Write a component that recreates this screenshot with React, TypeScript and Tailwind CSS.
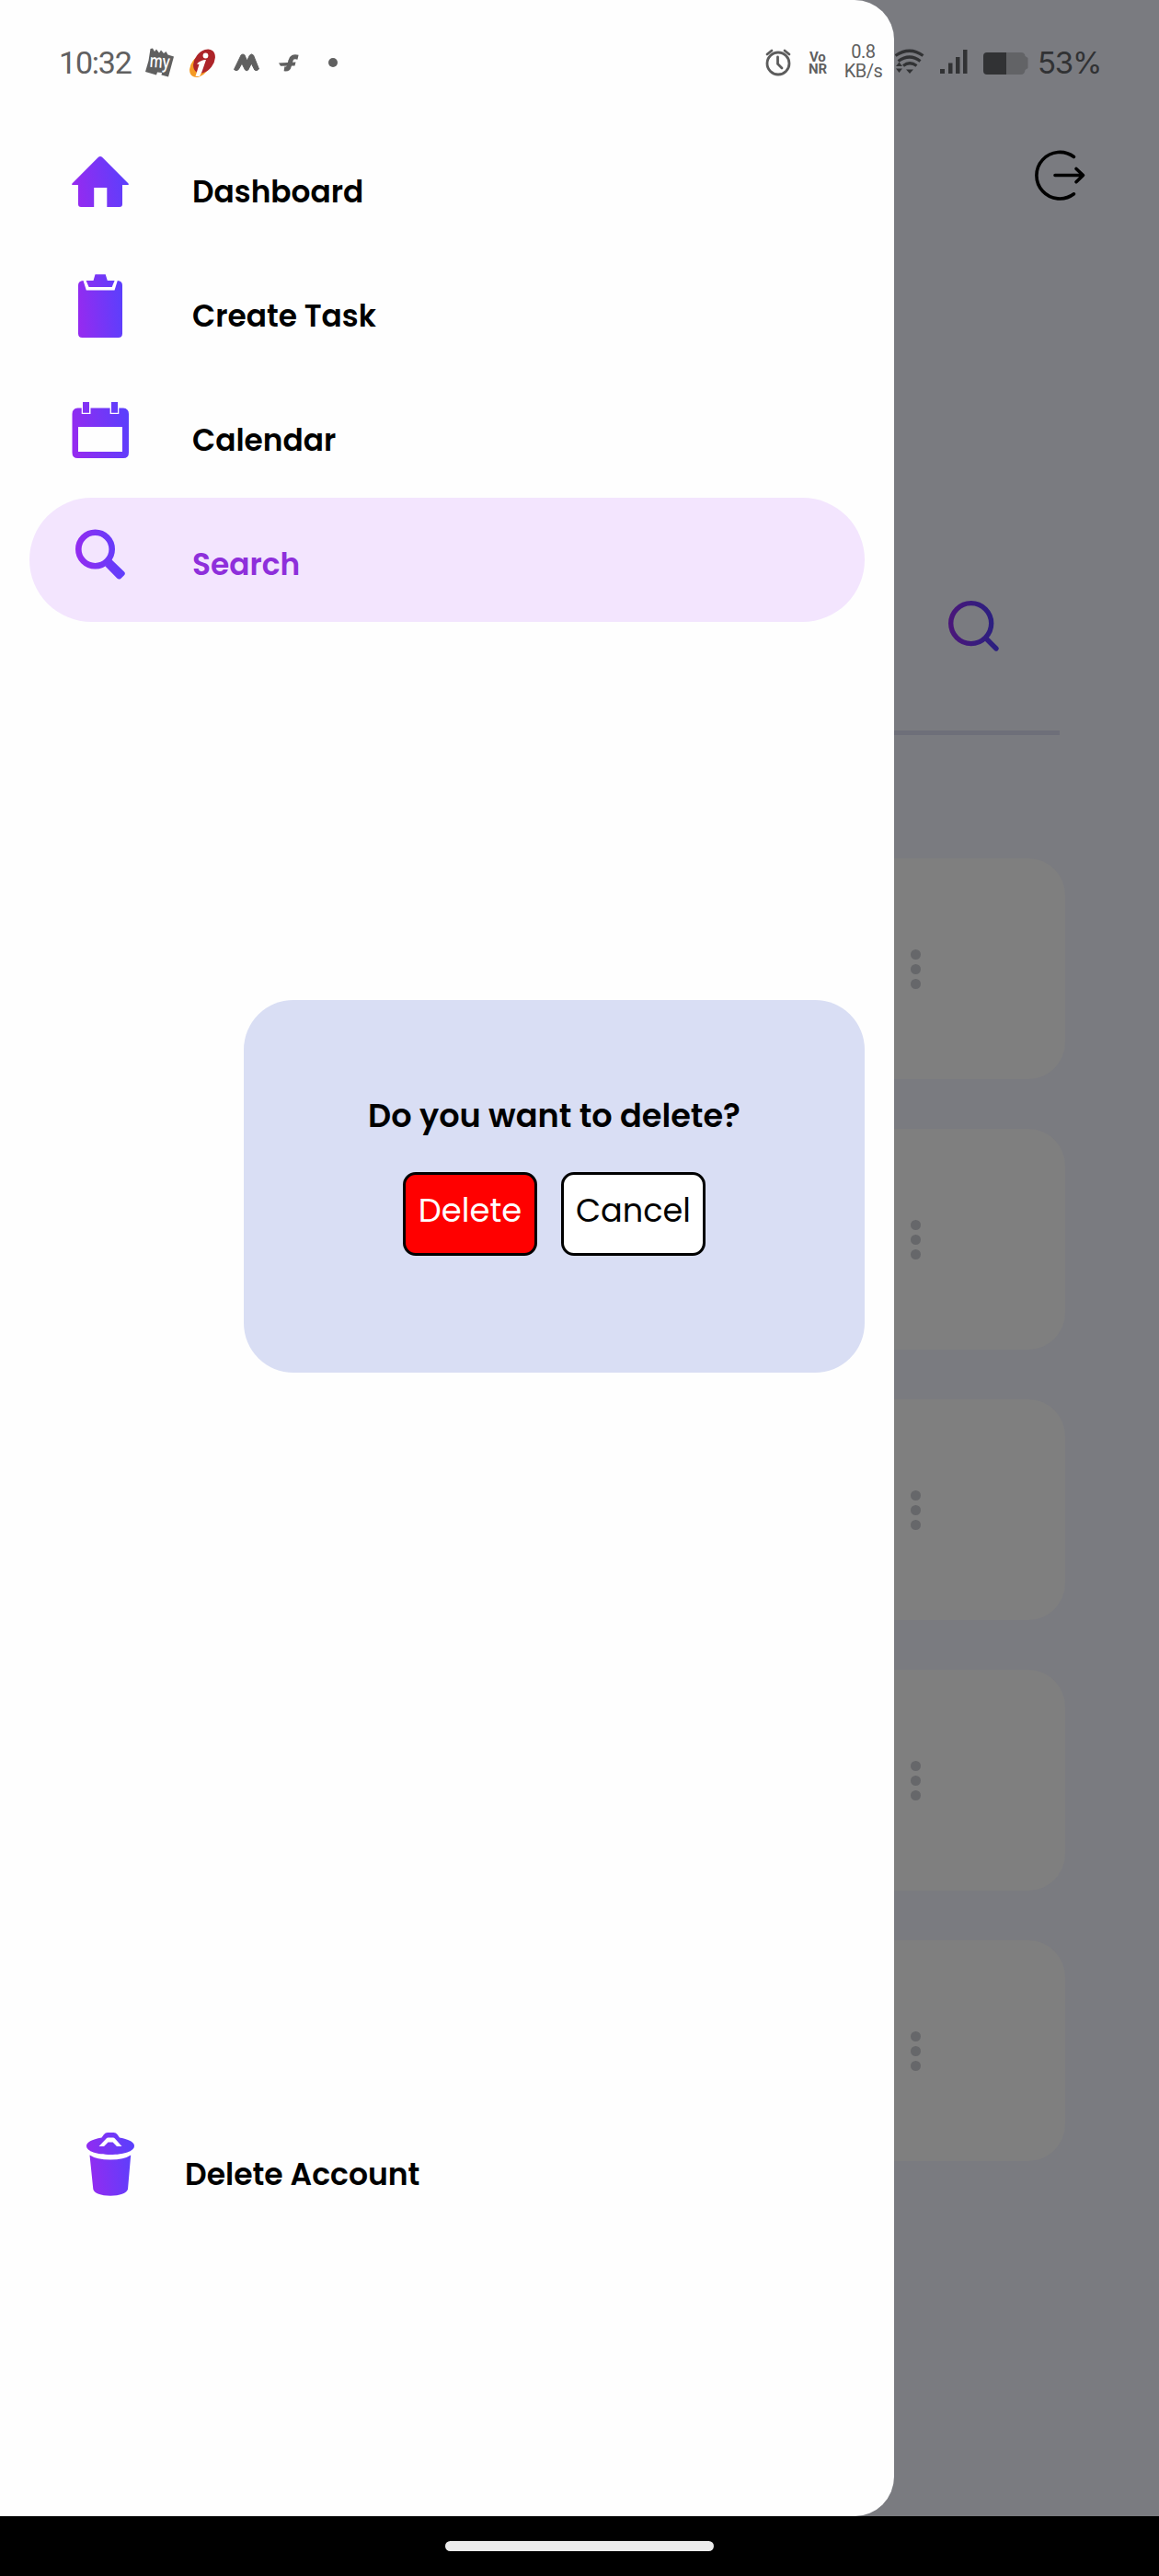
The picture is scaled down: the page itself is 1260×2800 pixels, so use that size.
import React from "react";

const FONT = "font-[Poppins,Inter,sans-serif]";

function Gradient({ id, x1, x2, y1, y2 }: { id: string; x1: number; x2: number; y1: number; y2: number }) {
  return (
    <defs>
      <linearGradient id={id} gradientUnits="userSpaceOnUse" x1={x1} x2={x2} y1={y1} y2={y2}>
        <stop offset="0" stopColor="#942bf0" />
        <stop offset="1" stopColor="#5c3ffc" />
      </linearGradient>
    </defs>
  );
}

function HomeIcon() {
  return (
    <svg viewBox="68 156 82 82" className="size-[82px]">
      <Gradient id="home" x1={82} x2={138} y1={205} y2={195} />
      <path
        fill="url(#home)"
        d="M107 170.8Q109 169 111 170.8L139.6 199.4Q140.6 201 139 201H133V222Q133 225 130 225H116.3V204H102.2V225H88Q85 225 85 222V201H79Q77.4 201 78.4 199.4Z"
      />
    </svg>
  );
}

function ClipboardIcon() {
  return (
    <svg viewBox="68 291 82 82" className="size-[82px]">
      <Gradient id="clip" x1={85} x2={133} y1={335} y2={330} />
      <path
        fill="url(#clip)"
        d="M90.5 305L93.8 315.5H124.5L127.8 305Q133 305.5 133 310V362.5Q133 367 128.5 367H89.5Q85 367 85 362.5V310Q85 305.5 90.5 305Z"
      />
      <path fill="url(#clip)" d="M103.5 298.3H114.7L116.8 305H124.6L121.7 312H96.6L93.6 305H101.5Z" />
    </svg>
  );
}

function CalendarIcon() {
  return (
    <svg viewBox="68 426 82 82" className="size-[82px]">
      <Gradient id="cal" x1={80} x2={140} y1={475} y2={462} />
      <path
        fill="url(#cal)"
        fillRule="evenodd"
        d="M84.5 443.5H88.7V450H98.5V443.5H119.6V450H129.3V443.5H134Q140 444 140 450V492Q140 498 134 498H84.5Q78.5 498 78.5 492V450Q78.5 444 84.5 443.5ZM85 464V491H133V464Z"
      />
      <path fill="url(#cal)" d="M90 437H97V448.7H90ZM121 437H128V448.7H121Z" />
    </svg>
  );
}

function SearchIcon() {
  return (
    <svg viewBox="68 561 82 82" className="size-[82px]">
      <Gradient id="search" x1={82} x2={136} y1={605} y2={600} />
      <circle cx="103.5" cy="597" r="18.2" fill="none" stroke="url(#search)" strokeWidth="6.6" />
      <path
        fill="url(#search)"
        d="M121 608L134.8 621.2Q137 623.3 134.8 625.5L131.5 628.7Q129.3 630.5 127.2 628.6L114.5 615.5Z"
      />
    </svg>
  );
}

function TrashIcon() {
  return (
    <svg viewBox="79 2311 82 82" className="size-[82px]">
      <Gradient id="trash" x1={95} x2={145} y1={2355} y2={2348} />
      <path
        fill="url(#trash)"
        d="M110.5 2323.5L113 2320Q114.5 2318 117 2318H123.5Q126 2318 127.5 2320L130 2323.5Q146 2326.5 146 2332.5C146 2338.5 134.5 2342 120 2342S94 2338.5 94 2332.5Q94 2326.5 110.5 2323.5Z"
      />
      <path
        fill="white"
        d="M107.5 2333L115.8 2324.2Q116.5 2323.5 117.5 2323.5H123Q124 2323.5 124.7 2324.2L132.5 2333H127L122.6 2328.5H117.5L113 2333Z"
      />
      <path fill="url(#trash)" d="M97.5 2342.5Q105 2347.5 120 2347.5T142.2 2342.5L139 2379.5C138 2384 130 2386.7 120 2386.7S102 2384 101.3 2379.5Z" />
    </svg>
  );
}

type NavItem = { label: string; icon: React.ReactNode; active?: boolean };

const items: NavItem[] = [
  { label: "Dashboard", icon: <HomeIcon /> },
  { label: "Create Task", icon: <ClipboardIcon /> },
  { label: "Calendar", icon: <CalendarIcon /> },
  { label: "Search", icon: <SearchIcon />, active: true },
];

function StatusBar() {
  return (
    <div className="absolute inset-x-0 top-0 flex h-[136px] items-center pl-[64px] font-[Roboto,sans-serif] text-[#606060]">
      <span className="w-[94px] text-[34px] tracking-[-1.2px] whitespace-nowrap">10:32</span>
      <svg viewBox="158 50 170 36" className="h-9 w-[170px]">
        <path
          fill="#606060"
          d="M163.5 53L166 52.5L168 56L170 53.5L173 57.5L175 54.5L178 58L180.5 56L182.5 59.5L189 61.5L183 83.5L175.5 81.5L176 79L171 78.5L170 81.5L158 78L161.5 66Z"
        />
        <text x="162.5" y="73.5" fontSize="20" fontWeight="600" fill="white" fontFamily="Open Sans" textLength="22" lengthAdjust="spacingAndGlyphs" transform="rotate(4 172 68)">
          my
        </text>
        <ellipse cx="217.5" cy="71.5" rx="9.5" ry="14" fill="#f59a23" transform="rotate(38 217.5 71.5)" />
        <ellipse cx="222" cy="66.5" rx="10" ry="14.5" fill="#ad2429" transform="rotate(38 222 66.5)" />
        <circle cx="223.5" cy="60.5" r="2.9" fill="white" />
        <path fill="white" d="M214 69.5Q218 65 224 65L219.5 78L217 83H212.5L216.5 70Z" />
        <path
          fill="#606060"
          stroke="#606060"
          strokeWidth="1"
          d="M254.5 75.5L262 60Q264 57.8 266 60L268.5 66L271.5 60Q273.5 57.8 275.5 60L281.5 75Q279 78 276.8 76L273.3 69L269.8 76Q268.2 77.5 266.5 76L263 69L259.3 75.5Q257 78 254.5 75.5Z"
        />
        <path
          fill="none"
          stroke="#606060"
          strokeWidth="5"
          d="M324 62.2Q317 60.5 316 66L314.2 72Q313.5 75.5 309 74.8"
        />
        <path fill="#606060" d="M303 68.5L321.5 67.5L320.5 71.5L305 71.8Z" />
      </svg>
      <span className="ml-[29px] size-[10px] rounded-full bg-[#606060]" />
      <svg viewBox="832 53 30 30" className="ml-[465px] size-[30px]" fill="none" stroke="#5c5c5c" strokeWidth="2.8">
        <circle cx="846" cy="69" r="12" />
        <path strokeLinecap="round" d="M834 59l5-4M858 59l-5-4M845.5 62v7.5l4.500 4.500" />
      </svg>
      <span className="ml-[17px] flex w-[25px] flex-col pt-px text-[15px] leading-[13px] font-bold tracking-[-0.2px] text-[#606060]">
        <span className="pl-px">Vo</span>
        <span>NR</span>
      </span>
      <span className="ml-[12px] flex w-[45px] flex-col items-center pb-[2px] text-[20px] leading-[21px] tracking-[-0.5px]">
        <span>0.8</span>
        <span>KB/s</span>
      </span>
      <svg viewBox="973 53 146 30" className="ml-[12px] h-[30px] w-[146px]" fill="#313234">
        <path
          fill="none"
          stroke="#313234"
          strokeWidth="3.2"
          d="M973.5 60.5Q989 50 1003.5 60.5M976.5 66.5Q989 57.5 1000.5 66.5M982 71.5Q989 66 996.5 71.5"
        />
        <path d="M974 72l3.500-4.500 3.500 4.500zM974 74.500l3.500 4.500 3.500-4.500zM985 75.500h8l-4 4.500z" />
        <path d="M1022 75h5v5h-5zM1031 68.500h4.500V80H1031zM1039 62h4.500v18H1039zM1047 54h4.500v26H1047z" />
        <path fill="#626366" d="M1090 57h20q4 0 4.500 4l3 2v11l-3 2q-.5 5-4.500 5h-20z" />
        <path d="M1073 57h21v24h-21q-4 0-4-4V61q0-4 4-4z" />
      </svg>
      <span className="ml-[9px] pt-px font-[Inter,sans-serif] text-[33px] tracking-[-1.2px] text-[#313234]">53%</span>
    </div>
  );
}

function TaskScreen() {
  return (
    <main className="flex h-[2735px] flex-col items-end bg-[#7a7b80]">
      <svg viewBox="1121 160 62 62" className="mt-[160px] mr-[77px] size-[62px]" fill="none" stroke="black" strokeWidth="3.6" strokeLinecap="round" strokeLinejoin="round">
        <path d="M1167.5 170.5A25.3 25.3 0 1 0 1167.5 210.8M1147 190.5H1177.5M1170 183.5L1177.5 190.5L1170 197.7" />
      </svg>
      <svg viewBox="1025 647 64 64" className="mt-[425px] mr-[171px] size-[64px]" fill="none" stroke="url(#dim)" strokeWidth="5.4" strokeLinecap="round">
        <defs>
          <linearGradient id="dim" gradientUnits="userSpaceOnUse" x1="1033" x2="1080" y1="680" y2="676">
            <stop offset="0" stopColor="#4a167a" />
            <stop offset="1" stopColor="#2c2080" />
          </linearGradient>
        </defs>
        <path d="M1077.7 677.6A22 22 0 1 1 1033.7 677.6A22 22 0 1 1 1077.7 677.6M1071.5 693.5L1083 705" />
      </svg>
      <div className="mt-[83px] mr-[108px] h-[5px] w-[1044px] bg-[#6e6f79]" />
      <div className="mt-[134px] mr-[102px] flex flex-col gap-[54px]">
        {[0, 1, 2, 3, 4].map((i) => (
          <div key={i} className="flex h-[240px] w-[1055px] flex-col items-end justify-center gap-[5px] rounded-[40px] bg-[#7f7f7f] pr-[157px]">
            <span className="size-[11px] rounded-full bg-[#66676a]" />
            <span className="size-[11px] rounded-full bg-[#66676a]" />
            <span className="size-[11px] rounded-full bg-[#66676a]" />
          </div>
        ))}
      </div>
    </main>
  );
}

function Drawer() {
  return (
    <aside className={`absolute top-0 left-0 flex h-[2735px] w-[972px] flex-col rounded-r-[43px] bg-[#fefefe] px-8 pt-[136px] text-black ${FONT}`}>
      <nav className="flex flex-col">
        {items.map((it) => (
          <div key={it.label} className={`flex h-[135px] items-start rounded-full pt-5 pl-9 ${it.active ? "bg-[#f3e5fe] text-[#8e2fdb]" : ""}`}>
            {it.icon}
            <span className="mt-[33px] ml-[59px] text-[32.8px] leading-[40px] font-semibold whitespace-nowrap">{it.label}</span>
          </div>
        ))}
      </nav>
      <section className="mt-[411px] flex h-[405px] w-[675px] flex-col items-center self-end rounded-[54px] bg-[#d9def4] pt-[106px]">
        <h2 className="text-[35.1px] leading-[40px] font-semibold whitespace-nowrap">Do you want to delete?</h2>
        <div className="mt-[41px] flex gap-[26px]">
          <button className="flex h-[91px] w-[146px] items-start justify-center rounded-[14px] border-[3px] border-black bg-[#ff0000] pt-[19px] text-[35.4px] leading-[40px] text-white">
            Delete
          </button>
          <button className="flex h-[91px] w-[157px] items-start justify-center rounded-[14px] border-[3px] border-black bg-white pt-[19px] text-[35.1px] leading-[40px]">
            Cancel
          </button>
        </div>
      </section>
      <div className="mt-[819px] flex items-start pl-[47px]">
        <TrashIcon />
        <span className="mt-[33px] ml-[40px] text-[33px] leading-[40px] font-semibold whitespace-nowrap">Delete Account</span>
      </div>
    </aside>
  );
}

export default function App() {
  return (
    <div className="relative h-[2800px] w-[1260px] overflow-hidden bg-black">
      <TaskScreen />
      <div className="flex h-[65px] justify-center pt-[27px]">
        <div className="h-[11px] w-[292px] rounded-full bg-[#ebebeb]" />
      </div>
      <Drawer />
      <StatusBar />
    </div>
  );
}
